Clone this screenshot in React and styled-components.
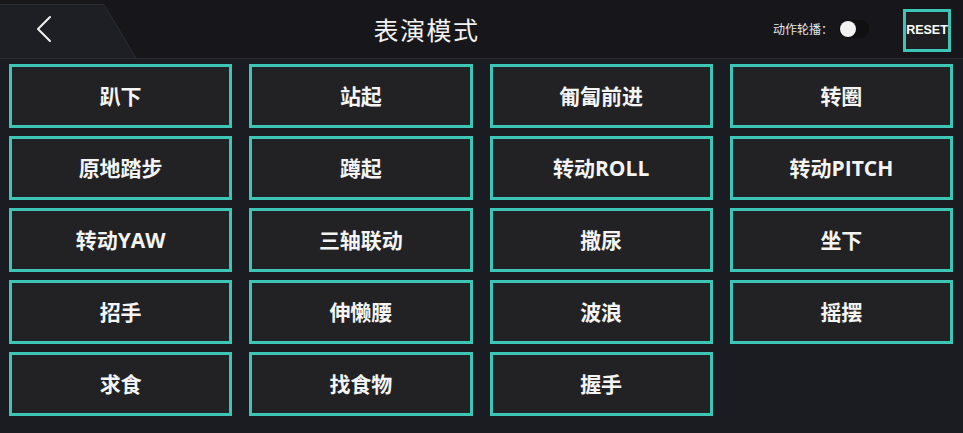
import React, { useState } from "react";
import styled, { createGlobalStyle } from "styled-components";

const GlobalStyle = createGlobalStyle`
  html, body {
    margin: 0;
    padding: 0;
    background: #1b1c21;
  }
  body {
    font-family: "Noto Sans", "Noto Sans CJK SC", sans-serif;
    color: #fff;
  }
`;

const Page = styled.div`
  width: 963px;
  height: 433px;
  overflow: hidden;
  background: #1b1c21;
  display: flex;
  flex-direction: column;
`;

const Header = styled.header`
  position: relative;
  height: 58px;
  flex-shrink: 0;
  display: flex;
  align-items: center;
  padding: 0 12px 0 0;
  background: #17171b;
  border-bottom: 1px solid #2b2b31;
`;

const Tab = styled.div`
  position: absolute;
  left: 0;
  top: 4px;
  width: 136px;
  height: 54px;
  background: #1e1f24;
  clip-path: polygon(0 0, 104px 0, 136px 54px, 0 54px);
`;

const TabEdge = styled.svg`
  position: absolute;
  left: 0;
  top: 4px;
`;

const BackButton = styled.button`
  position: relative;
  z-index: 1;
  width: 80px;
  flex-shrink: 0;
  height: 58px;
  padding: 0 0 0 35px;
  display: flex;
  align-items: center;
  background: none;
  border: none;
  cursor: pointer;
`;

const Title = styled.h1`
  flex: 1;
  margin: 0;
  line-height: 60px;
  text-align: center;
  font-family: "Noto Sans CJK SC", sans-serif;
  font-size: 25px;
  font-weight: 400;
  letter-spacing: 1.5px;
  color: #f2f2f2;
`;

const Right = styled.div`
  position: relative;
  z-index: 1;
  display: flex;
  align-items: center;
`;

const Label = styled.span`
  font-size: 12px;
  color: #e6e6e6;
  margin-right: 6px;
`;

const Switch = styled.button`
  width: 30px;
  height: 18px;
  border-radius: 9px;
  border: none;
  padding: 0 1px;
  background: #101013;
  display: flex;
  align-items: center;
  justify-content: ${(p) => (p.$on ? "flex-end" : "flex-start")};
  margin-right: 34px;
  cursor: pointer;
`;

const Knob = styled.span`
  width: 16px;
  height: 16px;
  border-radius: 50%;
  background: #f2f2f2;
`;

const ResetButton = styled.button`
  width: 48px;
  height: 43px;
  margin-top: 2px;
  box-sizing: border-box;
  border: 3px solid #3cc6b8;
  background: #1f1f22;
  color: #fff;
  font-family: "Liberation Sans", sans-serif;
  font-weight: 700;
  font-size: 12.5px;
  padding: 0;
  cursor: pointer;
`;

const Grid = styled.div`
  display: grid;
  grid-template-columns: repeat(4, 1fr);
  grid-auto-rows: 64px;
  column-gap: 17px;
  row-gap: 8px;
  padding: 5px 10px 0 9px;
`;

const ActionButton = styled.button`
  box-sizing: border-box;
  border: 3px solid #3cc6b8;
  background: #222224;
  color: #f4f4f4;
  font-family: "Open Sans", "Noto Sans CJK SC", sans-serif;
  font-size: 21px;
  font-weight: 700;
  display: flex;
  align-items: center;
  justify-content: center;
  padding: 0 0 2px;
  cursor: pointer;
`;

const actions = [
  "趴下", "站起", "匍匐前进", "转圈",
  "原地踏步", "蹲起", "转动ROLL", "转动PITCH",
  "转动YAW", "三轴联动", "撒尿", "坐下",
  "招手", "伸懒腰", "波浪", "摇摆",
  "求食", "找食物", "握手",
];

export default function App() {
  const [loop, setLoop] = useState(false);
  return (
    <Page>
      <GlobalStyle />
      <Header>
        <Tab />
        <TabEdge width="140" height="54">
          <path d="M0 0.5 H104 L136 54" fill="none" stroke="#2c2d33" strokeWidth="1" />
        </TabEdge>
        <BackButton>
          <svg width="18" height="28" viewBox="0 0 18 28">
            <path d="M15 2 L3 14 L15 26" fill="none" stroke="#f0f0f0" strokeWidth="2" strokeLinecap="round" strokeLinejoin="round" />
          </svg>
        </BackButton>
        <Title>表演模式</Title>
        <Right>
          <Label>动作轮播：</Label>
          <Switch $on={loop} onClick={() => setLoop(!loop)}>
            <Knob />
          </Switch>
          <ResetButton>RESET</ResetButton>
        </Right>
      </Header>
      <Grid>
        {actions.map((a) => (
          <ActionButton key={a}>{a}</ActionButton>
        ))}
      </Grid>
    </Page>
  );
}
